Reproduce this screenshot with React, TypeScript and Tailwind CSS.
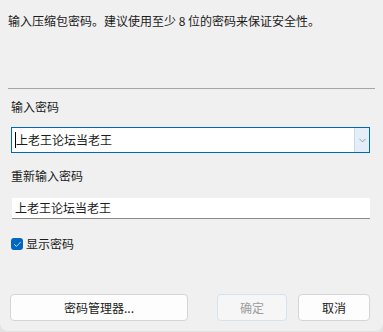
import { Check, ChevronDown } from 'lucide-react';

const font = { fontFamily: '"Noto Sans CJK SC", "Noto Sans", sans-serif' };

function Button({ label, disabled, className }: { label: string; disabled?: boolean; className: string }) {
  return (
    <button
      disabled={disabled}
      className={
        'h-[27px] rounded-[4px] border text-[12px] leading-[16px] ' +
        (disabled
          ? 'bg-[#f6f6f6] border-[#d3e3f0] text-[#9d9d9d] '
          : 'bg-[#fdfdfd] border-[#d5d5d5] text-[#1b1b1b] ') +
        className
      }
    >
      {label}
    </button>
  );
}

export default function App() {
  return (
    <div className="w-[383px] h-[332px] bg-[#e2e2e2] overflow-hidden" style={font}>
      <div className="h-[331px] bg-[#f0f0f0] rounded-b-[8px] flex flex-col text-[#1b1b1b]">
        <p className="mt-[13px] ml-[8px] text-[12px] leading-[16px]">
          输入压缩包密码。建议使用至少 8 位的密码来保证安全性。
        </p>

        <div className="mt-[59px] mx-[8px] h-px bg-[#a5a5a5]" />

        <label className="mt-[10px] ml-[11px] text-[12px] leading-[16px]">输入密码</label>

        {/* combo box, focused */}
        <div className="mt-[12px] ml-[11px] w-[359px] h-[26px] flex border border-[#0067c0] bg-white">
          <div className="flex-1 flex items-center pl-[3px]">
            <span className="w-px h-[16px] bg-black" />
            <span className="text-[12px] leading-[16px]">上老王论坛当老王</span>
          </div>
          <div className="w-[15px] flex items-center justify-center bg-[#e3eef9] border-l border-[#c6d9ee]">
            <ChevronDown size={11} strokeWidth={1.25} className="text-[#5b5b5b]" />
          </div>
        </div>

        <label className="mt-[15px] ml-[11px] text-[12px] leading-[16px]">重新输入密码</label>

        <div className="mt-[14px] ml-[12px] w-[358px] h-[21px] flex items-center pl-[3px] bg-white border-b border-[#8a8a8a]">
          <span className="text-[12px] leading-[16px]">上老王论坛当老王</span>
        </div>

        <div className="mt-[17px] ml-[11px] flex items-center gap-[3px]">
          <span className="w-[12px] h-[12px] rounded-[3px] bg-[#0067c0] flex items-center justify-center">
            <Check size={9} strokeWidth={2} className="text-white" />
          </span>
          <span className="text-[12px] leading-[16px]">显示密码</span>
        </div>

        <div className="mt-auto mb-[10px] flex">
          <Button label="密码管理器..." className="ml-[10px] w-[178px]" />
          <Button label="确定" disabled className="ml-[29px] w-[70px]" />
          <Button label="取消" className="ml-[11px] w-[72px]" />
        </div>
      </div>
    </div>
  );
}
